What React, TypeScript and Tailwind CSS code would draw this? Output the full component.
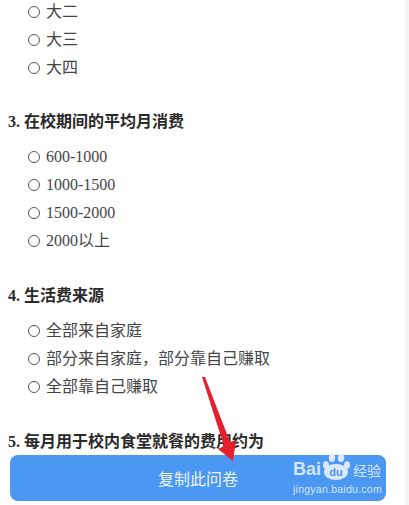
import React from 'react';

const font = { fontFamily: '"Liberation Serif", "Noto Sans CJK SC", serif' };

const Option = ({ label }: { label: string }) => (
  <div className="flex h-7 items-center pl-7 text-[16px] text-[#444]">
    <span className="mr-[6px] h-3 w-3 rounded-full border border-[#555]" />
    <span>{label}</span>
  </div>
);

const Question = ({ title, options }: { title: string; options: string[] }) => (
  <div className="mb-[29px]">
    <h3 className="mb-[9px] h-6 pl-2 text-[16px] font-bold leading-6 text-[#2a2a2a]">{title}</h3>
    {options.map((o) => (
      <Option key={o} label={o} />
    ))}
  </div>
);

const BaiduMark = () => (
  <div className="absolute right-[5px] top-[-4px] w-[88px] text-[#d5e6fb]">
    <div className="flex h-[30px] items-end whitespace-nowrap leading-none" style={{ fontFamily: '"Liberation Sans", "Noto Sans CJK SC", sans-serif' }}>
      <span className="shrink-0 text-[18px] font-bold leading-[23px]">Bai</span>
      <svg viewBox="0 0 30 28" className="h-[28px] w-[30px] shrink-0">
        <ellipse cx="5" cy="12" rx="3" ry="3.8" fill="#dbe9fb" />
        <ellipse cx="11" cy="5" rx="3.2" ry="4" fill="#dbe9fb" />
        <ellipse cx="20" cy="5" rx="3.2" ry="4" fill="#dbe9fb" />
        <ellipse cx="26" cy="12" rx="3" ry="3.8" fill="#dbe9fb" />
        <ellipse cx="15" cy="19" rx="12" ry="8" fill="#dbe9fb" />
        <text x="15" y="23" textAnchor="middle" fontSize="11" fontWeight="700" fill="#4a98f2">du</text>
      </svg>
      <span className="ml-[2px] shrink-0 text-[14px] leading-[20px]">经验</span>
    </div>
    <div className="mt-[2px] whitespace-nowrap text-[10.5px] leading-[13px] tracking-[0.25px]" style={{ fontFamily: '"Liberation Sans", sans-serif' }}>jingyan.baidu.com</div>
  </div>
);

export default function App() {
  return (
    <div className="relative h-[505px] w-[409px] overflow-hidden bg-white" style={font}>
      <div className="-mt-[2px] w-[405px]">
        <div className="mb-[28px]">
          <Option label="大二" />
          <Option label="大三" />
          <Option label="大四" />
        </div>
        <Question title="3. 在校期间的平均月消费" options={['600-1000', '1000-1500', '1500-2000', '2000以上']} />
        <Question title="4. 生活费来源" options={['全部来自家庭', '部分来自家庭，部分靠自己赚取', '全部靠自己赚取']} />
        <h3 className="h-6 pl-2 text-[16px] font-bold leading-6 text-[#2a2a2a]">5. 每月用于校内食堂就餐的费用约为</h3>
      </div>

      <div className="absolute bottom-0 right-0 top-0 w-[4px] bg-[#f5f5f5]" />

      <div className="absolute left-[10px] top-[455px] flex h-[46px] w-[376px] items-center justify-center rounded-lg bg-[#4a98f2] text-[16px] text-[#eef5fe]">
        <span style={{ fontFamily: '"Noto Sans CJK SC", sans-serif' }}>复制此问卷</span>
        <BaiduMark />
      </div>

      <svg viewBox="0 0 409 505" className="absolute left-0 top-0 h-[505px] w-[409px]">
        <polygon points="202,377 205,377 230,442 236,440 233,461 218,449 224,446" fill="#e5202e" />
      </svg>
    </div>
  );
}
